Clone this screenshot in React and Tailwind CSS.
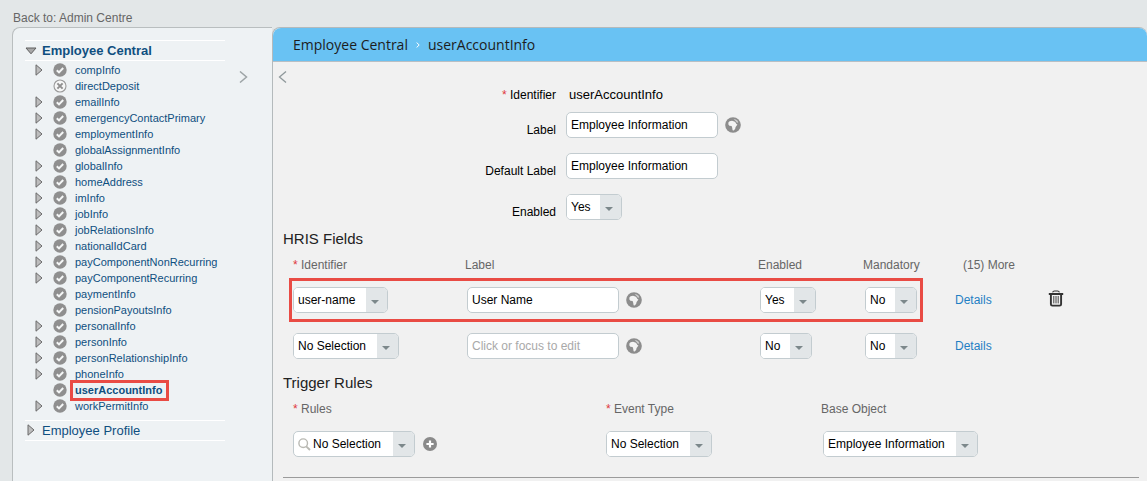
import React from "react";

const items = [
  { name: "compInfo", open: true },
  { name: "directDeposit", disabled: true },
  { name: "emailInfo", open: true },
  { name: "emergencyContactPrimary", open: true },
  { name: "employmentInfo", open: true },
  { name: "globalAssignmentInfo" },
  { name: "globalInfo", open: true },
  { name: "homeAddress", open: true },
  { name: "imInfo", open: true },
  { name: "jobInfo", open: true },
  { name: "jobRelationsInfo", open: true },
  { name: "nationalIdCard", open: true },
  { name: "payComponentNonRecurring", open: true },
  { name: "payComponentRecurring", open: true },
  { name: "paymentInfo" },
  { name: "pensionPayoutsInfo" },
  { name: "personalInfo", open: true },
  { name: "personInfo", open: true },
  { name: "personRelationshipInfo", open: true },
  { name: "phoneInfo", open: true },
  { name: "userAccountInfo", active: true },
  { name: "workPermitInfo", open: true },
];

function TriangleRight() {
  return (
    <svg width="8" height="13" viewBox="0 0 8 13" aria-hidden="true">
      <path d="M1 0.8 L7 6 L1 11.2 Z" fill="#bdbdbd" stroke="#6a6a6a" strokeWidth="1" />
    </svg>
  );
}

function TriangleDown() {
  return (
    <svg width="12" height="8" viewBox="0 0 12 8" aria-hidden="true">
      <path d="M1 1 H11 L6 6.8 Z" fill="#a8a8a8" stroke="#5f5f5f" strokeWidth="1" />
    </svg>
  );
}

function CheckCircle() {
  return (
    <svg width="14" height="14" viewBox="0 0 14 14" aria-hidden="true">
      <circle cx="7" cy="7" r="6.7" fill="#8f8f8f" />
      <path d="M3.8 7.2 L6 9.4 L10.2 5" fill="none" stroke="#f4f6f6" strokeWidth="2" />
    </svg>
  );
}

function CrossCircle() {
  return (
    <svg width="14" height="14" viewBox="0 0 14 14" aria-hidden="true">
      <circle cx="7" cy="7" r="6" fill="#f6f7f7" stroke="#9a9a9a" strokeWidth="1.1" />
      <path d="M4.4 4.4 L9.6 9.6 M9.6 4.4 L4.4 9.6" stroke="#8f8f8f" strokeWidth="2" />
    </svg>
  );
}

function Globe() {
  return (
    <svg width="16" height="16" viewBox="0 0 16 16" aria-hidden="true">
      <circle cx="8" cy="8" r="7.8" fill="#8d8d8d" />
      <path
        d="M3.4 5.6 L4.6 4.2 L7 3.8 L9.4 4.4 L10.6 5.6 L11.4 7 L12.4 7.4 L11.4 9 L10.6 10 L10.2 11.8 L8.8 13.6 L7.6 13.2 L7.2 10.8 L6.6 9 L4.4 8.8 L3.4 7.6 Z"
        fill="#f3f3f3"
      />
      <path d="M8.6 2 L10.8 2.4 L12.6 3.8 L13.2 5.6 L12 5.8 L10.8 4.2 Z" fill="#cfcfcf" />
    </svg>
  );
}

function PlusCircle() {
  return (
    <svg width="14" height="14" viewBox="0 0 14 14" aria-hidden="true">
      <circle cx="7" cy="7" r="7" fill="#8a8a8a" />
      <path d="M7 3.4 V10.6 M3.4 7 H10.6" stroke="#fff" strokeWidth="2.2" />
    </svg>
  );
}

function Trash() {
  return (
    <svg width="16" height="17" viewBox="0 0 16 17" fill="none" aria-hidden="true">
      <path d="M4.6 2.4 Q5 1 6.4 1 H9.6 Q11 1 11.4 2.4" stroke="#333" strokeWidth="1.1" />
      <path d="M0.8 4 H15.2" stroke="#333" strokeWidth="2" />
      <path d="M2.9 4.5 V14.2 Q2.9 15.6 4.4 15.6 H11.6 Q13.1 15.6 13.1 14.2 V4.5" stroke="#333" strokeWidth="1.9" />
      <path d="M5.8 6 V13.4 M8 6 V13.4 M10.2 6 V13.4" stroke="#444" strokeWidth="1" />
    </svg>
  );
}

function SearchIcon() {
  return (
    <svg width="13" height="13" viewBox="0 0 13 13" fill="none" aria-hidden="true">
      <circle cx="5.2" cy="5.2" r="4.3" stroke="#b9b9b3" strokeWidth="1.4" />
      <path d="M8.2 8.4 L12 12" stroke="#b9b9b3" strokeWidth="1.9" />
    </svg>
  );
}

function Select({ label, id, value, width, search }) {
  return (
    <span
      className={`relative inline-flex h-[26px] items-stretch overflow-hidden rounded-[5px] border border-[#c3ccd0] bg-white ${width}`}
    >
      {search && (
        <span className="flex items-center pl-1 pt-px">
          <SearchIcon />
        </span>
      )}
      <select
        id={id}
        aria-label={label}
        defaultValue={value}
        className={`min-w-0 flex-1 appearance-none bg-white text-xs text-black outline-none ${search ? "pl-[2px]" : "pl-1"}`}
      >
        <option>{value}</option>
      </select>
      <span className="pointer-events-none flex w-[21px] shrink-0 items-center justify-center bg-[#e2e6e8] pr-1 pt-1">
        <svg width="8" height="4" viewBox="0 0 8 4" aria-hidden="true">
          <path d="M0 0 H8 L4 4 Z" fill="#7c888b" />
        </svg>
      </span>
    </span>
  );
}

function TextBox({ id, label, value, placeholder }) {
  return (
    <input
      id={id}
      aria-label={label}
      type="text"
      defaultValue={value}
      placeholder={placeholder}
      className="h-[26px] w-[152px] rounded-[5px] border border-[#c3ccd0] bg-white pl-1 text-xs text-black outline-none placeholder:text-[#a9a9a9]"
    />
  );
}

function GlobeButton() {
  return (
    <button type="button" aria-label="Translations" className="flex">
      <Globe />
    </button>
  );
}

function Star() {
  return <span className="text-[#e0383c]">* </span>;
}

function FieldRow({ label, marked, labelled, mandatory }) {
  const edge = marked ? "h-11 border-y-3 border-[#e94b44] p-0" : "h-12 p-0";
  return (
    <tr>
      <td className={`${edge} ${marked ? "border-l-3 pl-px" : "pl-1"}`}>
        <div className="flex">
          <Select label="Identifier" value={label} width={marked ? "w-[95px]" : "w-[106px]"} />
        </div>
      </td>
      <td className={edge}>
        <div className="flex items-center gap-[7px] pl-[2px]">
          <TextBox label="Field label" value={labelled} placeholder="Click or focus to edit" />
          <GlobeButton />
        </div>
      </td>
      <td className={edge}>
        <div className="flex pl-[2px]">
          <Select label="Enabled" value={marked ? "Yes" : "No"} width={marked ? "w-14" : "w-[52px]"} />
        </div>
      </td>
      <td className={`${edge} ${marked ? "border-r-3" : ""}`}>
        <div className="flex pl-[2px]">
          <Select label="Mandatory" value={mandatory} width="w-[52px]" />
        </div>
      </td>
      <td className="pl-8">
        <a href="#details" className="text-[#1f7fc4]">
          Details
        </a>
      </td>
      <td className="pb-1">
        {marked && (
          <button type="button" aria-label="Delete" className="flex">
            <Trash />
          </button>
        )}
      </td>
    </tr>
  );
}

function Sidebar() {
  return (
    <aside className="flex w-[260px] shrink-0 items-start rounded-tl-lg border-l border-t border-[#b9bebf] bg-[#eef2f4] pl-3 pt-3">
      <nav aria-label="Elements" className="w-[200px] text-[#0f4f80]">
        <a href="#central" className="flex h-[21px] items-center border-y border-white text-[13px] font-bold">
          <span className="flex w-[17px]">
            <TriangleDown />
          </span>
          Employee Central
        </a>
        <ul className="pb-[6px] pt-px">
          {items.map((item) => (
            <li key={item.name} className="flex h-4 items-center pl-[10px] text-[11px]">
              <span className="flex w-[18px]">{item.open && <TriangleRight />}</span>
              <span className="flex w-[17px]">{item.disabled ? <CrossCircle /> : <CheckCircle />}</span>
              {item.active ? (
                <a
                  href="#userAccountInfo"
                  aria-current="page"
                  className="relative z-10 border-3 border-[#e94b44] pl-[2px] pr-1 text-[11px] leading-[15px] font-bold"
                >
                  {item.name}
                </a>
              ) : (
                <a href={"#" + item.name} className="whitespace-nowrap pl-[5px]">
                  {item.name}
                </a>
              )}
            </li>
          ))}
        </ul>
        <a href="#profile" className="flex h-[21px] items-center border-y border-white text-[13px]">
          <span className="flex w-[17px] pl-[2px]">
            <TriangleRight />
          </span>
          Employee Profile
        </a>
      </nav>
      <button type="button" aria-label="Expand list" className="ml-[14px] mt-[31px]">
        <svg width="9" height="12" viewBox="0 0 9 12" fill="none" aria-hidden="true">
          <path d="M1 0.5 L7.5 6 L1 11.5" stroke="#9da4a6" strokeWidth="1.5" />
        </svg>
      </button>
    </aside>
  );
}

export default function App() {
  return (
    <div className="flex min-h-screen flex-col bg-[#e3e7e8] pl-3 font-['Liberation_Sans',Arial,sans-serif] text-xs text-black">
      <header className="flex h-[27px] items-end pb-px pl-px">
        <a href="#admin" className="leading-4 text-[#666]">
          Back to: Admin Centre
        </a>
      </header>
      <div className="flex flex-1">
        <Sidebar />
        <main className="min-w-0 flex-1 rounded-t-lg border-l border-t border-[#b4babc] bg-[#f1f1f1]">
          <div className="flex h-[34px] items-center rounded-t-lg border-b border-[#b9bfc4] bg-[#69c2f3] pl-5 font-['Open_Sans',sans-serif] text-sm text-[#1d1d1d]">
            <a href="#central">Employee Central</a>
            <svg width="4" height="6" viewBox="0 0 4 6" fill="none" className="mx-2" aria-hidden="true">
              <path d="M0.6 0.5 L3.2 3 L0.6 5.5" stroke="#fff" strokeWidth="1" />
            </svg>
            <h1>userAccountInfo</h1>
          </div>
          <div className="pl-[10px] pr-2">
            <div className="flex items-start">
              <button type="button" aria-label="Collapse list" className="mt-[9px] -ml-[5px]">
                <svg width="9" height="12" viewBox="0 0 9 12" fill="none" aria-hidden="true">
                  <path d="M8 0.5 L1.5 6 L8 11.5" stroke="#8f989b" strokeWidth="1.3" />
                </svg>
              </button>
              <div className="grid grid-cols-[269px_1fr] gap-x-[10px] pt-[25px] leading-4">
                <div className="mb-[9px] text-right">
                  <Star />
                  Identifier
                </div>
                <div className="pl-[3px] text-[13px]">userAccountInfo</div>
                <label htmlFor="label" className="mb-[15px] self-end text-right">
                  Label
                </label>
                <div className="mb-[15px] flex items-center gap-[7px]">
                  <TextBox id="label" value="Employee Information" />
                  <GlobeButton />
                </div>
                <label htmlFor="default-label" className="mb-[15px] self-end text-right">
                  Default Label
                </label>
                <div className="mb-[15px] flex">
                  <TextBox id="default-label" value="Employee Information" />
                </div>
                <label htmlFor="enabled" className="self-end text-right">
                  Enabled
                </label>
                <div className="flex">
                  <Select id="enabled" value="Yes" width="w-14" />
                </div>
              </div>
            </div>

            <h2 className="mb-[3px] mt-[9px] text-[15px] leading-5 text-[#222]">HRIS Fields</h2>
            <table className="ml-[6px] table-fixed border-separate border-spacing-0 text-left">
              <colgroup>
                <col className="w-44" />
                <col className="w-[293px]" />
                <col className="w-[105px]" />
                <col className="w-[60px]" />
                <col className="w-[125px]" />
                <col className="w-4" />
              </colgroup>
              <thead className="text-[#666]">
                <tr className="h-[26px]">
                  <th className="p-0 pl-1 font-normal">
                    <Star />
                    Identifier
                  </th>
                  <th className="p-0 font-normal">Label</th>
                  <th className="p-0 font-normal">Enabled</th>
                  <th className="p-0 font-normal">Mandatory</th>
                  <th className="p-0 pl-10 font-normal">(15) More</th>
                  <td />
                </tr>
              </thead>
              <tbody>
                <FieldRow label="user-name" labelled="User Name" mandatory="No" marked />
                <FieldRow label="No Selection" mandatory="No" />
              </tbody>
            </table>

            <h2 className="my-[3px] text-[15px] leading-5 text-[#222]">Trigger Rules</h2>
            <table className="ml-[10px] table-fixed border-separate border-spacing-0 text-left">
              <colgroup>
                <col className="w-[313px]" />
                <col className="w-[215px]" />
                <col className="w-[160px]" />
              </colgroup>
              <thead className="text-[#666]">
                <tr className="h-[26px]">
                  <th className="p-0 font-normal">
                    <Star />
                    Rules
                  </th>
                  <th className="p-0 font-normal">
                    <Star />
                    Event Type
                  </th>
                  <th className="p-0 font-normal">Base Object</th>
                </tr>
              </thead>
              <tbody>
                <tr className="h-11">
                  <td className="p-0">
                    <div className="flex items-center gap-2">
                      <Select label="Rules" value="No Selection" width="w-[122px]" search />
                      <button type="button" aria-label="Add rule" className="flex">
                        <PlusCircle />
                      </button>
                    </div>
                  </td>
                  <td className="p-0">
                    <div className="flex">
                      <Select label="Event Type" value="No Selection" width="w-[106px]" />
                    </div>
                  </td>
                  <td className="p-0">
                    <div className="flex pl-[2px]">
                      <Select label="Base Object" value="Employee Information" width="w-[155px]" />
                    </div>
                  </td>
                </tr>
              </tbody>
            </table>
            <hr className="mt-[11px] border-[#9b9b9b]" />
          </div>
        </main>
      </div>
    </div>
  );
}
